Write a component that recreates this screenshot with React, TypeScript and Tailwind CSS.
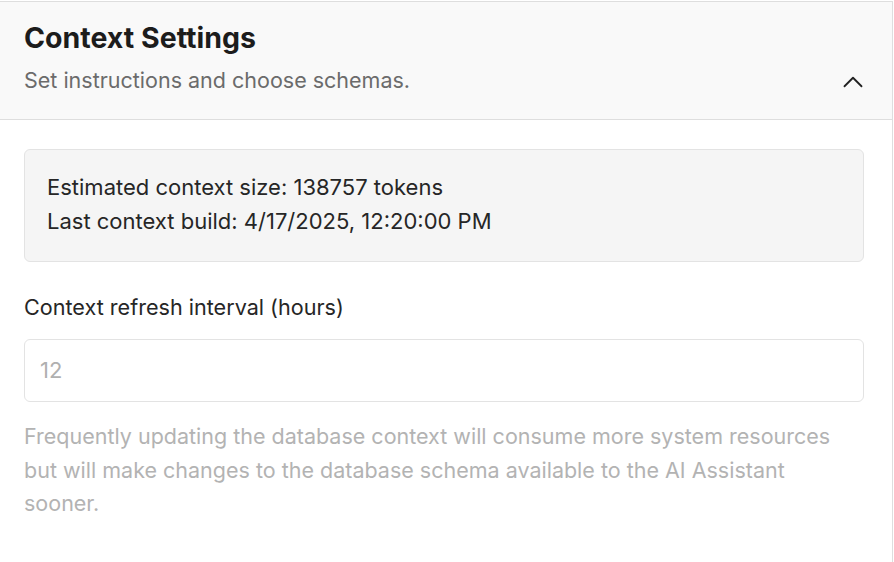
import React from "react";

export default function App() {
  return (
    <div
      className="w-[894px] h-[562px] bg-white overflow-hidden pt-px"
      style={{ fontFamily: "Inter, 'Noto Sans', sans-serif" }}
    >
      <div className="h-full border-t border-r border-[#dedede] w-[893px] flex flex-col">
        <div className="relative bg-[#f9f9f9] border-b border-[#dedede] px-6 pt-[19px] pb-[24px] flex flex-col">
          <h2 className="text-[28.5px] leading-[34px] font-bold text-[#1c1c1c]">
            Context Settings
          </h2>
          <p className="mt-[10px] text-[21.5px] leading-[30px] text-[#6b6b6b]">
            Set instructions and choose schemas.
          </p>
          <svg
            width="34"
            height="34"
            viewBox="0 0 24 24"
            fill="none"
            stroke="#222"
            strokeWidth="1.3"
            strokeLinecap="round"
            strokeLinejoin="round"
            className="absolute left-[836px] top-[63px]"
          >
            <path d="m18 15-6-6-6 6" />
          </svg>
        </div>
        <div className="px-6 pt-[29px] flex flex-col w-[888px]">
          <div className="bg-[#f5f5f5] border border-[#e3e3e3] rounded-[6px] px-[22px] pt-[20px] pb-[23px] text-[22px] leading-[34px] text-[#262626]">
            <div>Estimated context size: 138757 tokens</div>
            <div>Last context build: 4/17/2025, 12:20:00 PM</div>
          </div>
          <label className="mt-[28px] text-[21.6px] leading-[34px] text-[#262626]">
            Context refresh interval (hours)
          </label>
          <div className="mt-[15px] h-[63px] border border-[#e3e3e3] rounded-[6px] flex items-center px-[15px] text-[22px] text-[#b0b0b0]">
            12
          </div>
          <p className="mt-[18px] text-[21.5px] leading-[33.5px] text-[#b3b3b3]">
            Frequently updating the database context will consume more system resources but will make changes to the database schema available to the AI Assistant sooner.
          </p>
        </div>
      </div>
    </div>
  );
}
